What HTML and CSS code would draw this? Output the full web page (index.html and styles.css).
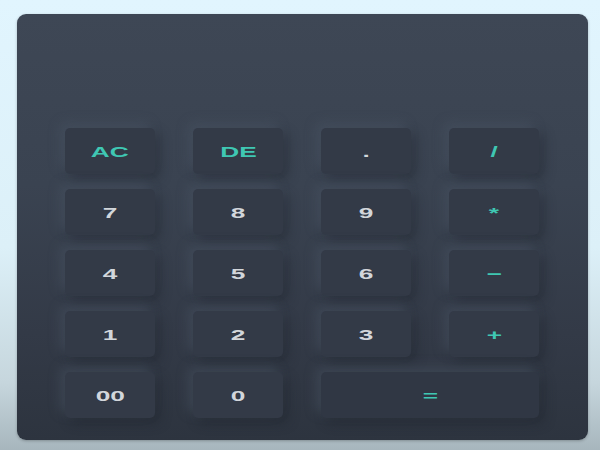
FILE: index.html
```html
<!DOCTYPE html>
<html>
<head>
<meta charset="utf-8">
<link rel="stylesheet" href="styles.css">
</head>
<body>
<div class="calc">
  <div class="display"></div>
  <div class="keys">
    <div class="key op"><span>AC</span></div>
    <div class="key op"><span>DE</span></div>
    <div class="key"><span>.</span></div>
    <div class="key op"><span>/</span></div>
    <div class="key"><span>7</span></div>
    <div class="key"><span>8</span></div>
    <div class="key"><span>9</span></div>
    <div class="key op"><span>*</span></div>
    <div class="key"><span>4</span></div>
    <div class="key"><span>5</span></div>
    <div class="key"><span>6</span></div>
    <div class="key op"><span>−</span></div>
    <div class="key"><span>1</span></div>
    <div class="key"><span>2</span></div>
    <div class="key"><span>3</span></div>
    <div class="key op"><span>+</span></div>
    <div class="key"><span>00</span></div>
    <div class="key"><span>0</span></div>
    <div class="key op wide"><span>=</span></div>
  </div>
</div>
</body>
</html>
```

FILE: styles.css
```css
html, body {
  margin: 0;
  padding: 0;
}
body {
  width: 600px;
  height: 450px;
  overflow: hidden;
  background: linear-gradient(180deg, #e1f5fe 0%, #dcf0f8 55%, #c6d6dd 85%, #a7b6bd 100%);
  font-family: "Liberation Sans", Arial, sans-serif;
  padding: 14px 12px 0 17px;
  box-sizing: border-box;
}
.calc {
  width: 571px;
  height: 426px;
  box-sizing: border-box;
  border-radius: 9px;
  background: linear-gradient(180deg, #3e4755 0%, #3a4351 40%, #333a47 75%, #2d343f 100%);
  padding: 0 48px 22px 48px;
  display: flex;
  flex-direction: column;
  box-shadow: 0 1px 3px rgba(0,0,0,0.25);
}
.display {
  height: 114px;
  flex: none;
}
.keys {
  display: grid;
  grid-template-columns: repeat(4, 90px);
  grid-template-rows: repeat(5, 46px);
  column-gap: 38px;
  row-gap: 15px;
}
.key {
  border-radius: 5px;
  background: #333a47;
  box-shadow: -5px -5px 12px rgba(78, 88, 104, 0.45), 5px 5px 12px rgba(28, 32, 40, 0.4);
  display: flex;
  align-items: center;
  justify-content: center;
  color: #d2d6db;
  font-size: 15px;
  font-weight: bold;
}
.key span {
  display: inline-block;
  transform: scaleX(1.75);
}
.op {
  color: #3fc7b3;
}
.wide {
  grid-column: span 2;
  background: #303744;
}
```
